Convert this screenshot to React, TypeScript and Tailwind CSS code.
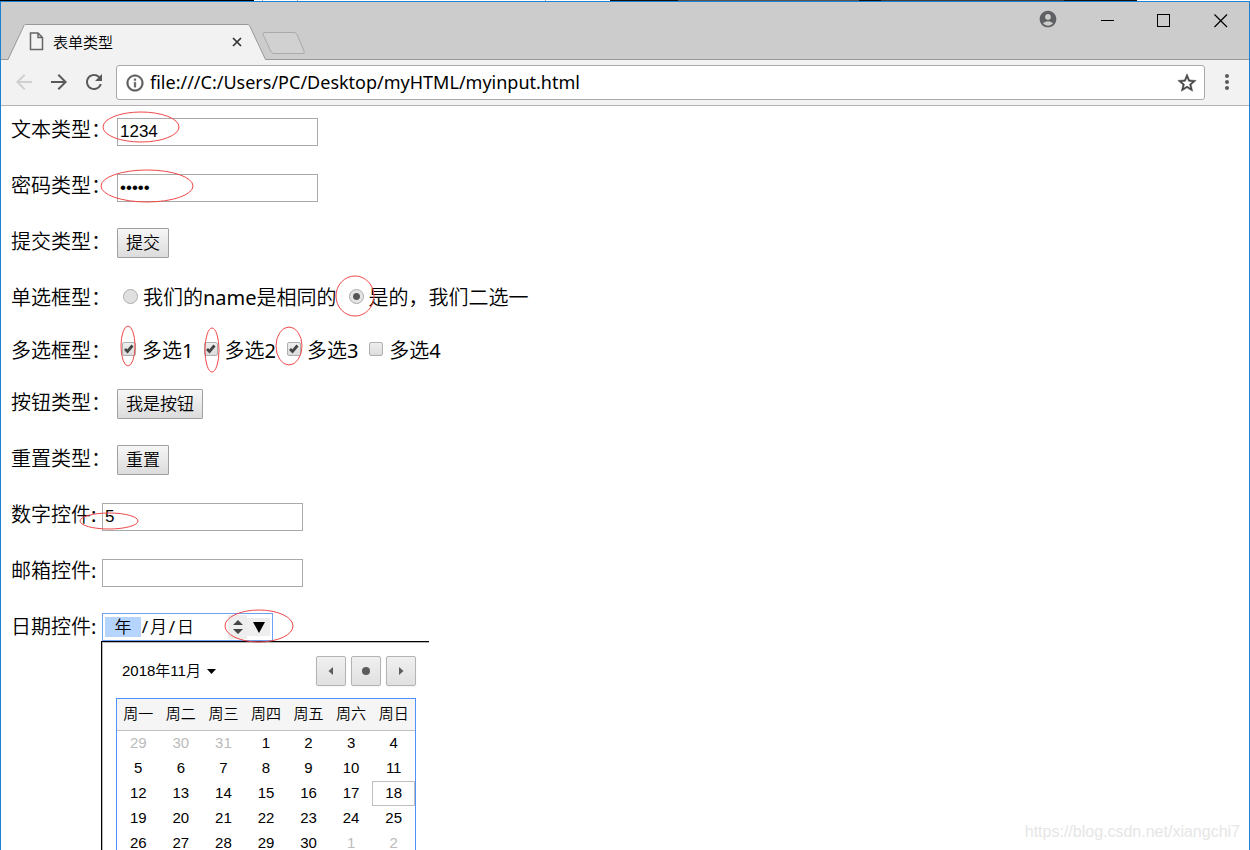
import React from "react";
import {
  MdAccountCircle,
  MdArrowBack,
  MdArrowForward,
  MdInfoOutline,
  MdMoreVert,
  MdRefresh,
  MdStarBorder,
} from "react-icons/md";

const weekdays = ["周一", "周二", "周三", "周四", "周五", "周六", "周日"];

const weeks = [
  [29, 30, 31, 1, 2, 3, 4],
  [5, 6, 7, 8, 9, 10, 11],
  [12, 13, 14, 15, 16, 17, 18],
  [19, 20, 21, 22, 23, 24, 25],
  [26, 27, 28, 29, 30, 1, 2],
];

const marks = [
  { cx: 141, cy: 127, rx: 38, ry: 15 },
  { cx: 147, cy: 186, rx: 46, ry: 16 },
  { cx: 355, cy: 296, rx: 19, ry: 20 },
  { cx: 128, cy: 346, rx: 7, ry: 20 },
  { cx: 212, cy: 350, rx: 7, ry: 22 },
  { cx: 289, cy: 346, rx: 13, ry: 19 },
  { cx: 109, cy: 521, rx: 29, ry: 8 },
  { cx: 259, cy: 626, rx: 34, ry: 16 },
];

const buttonLook =
  "border border-[#a0a0a0] rounded-[1px] bg-linear-to-b from-[#f6f6f6] to-[#dcdcdc]";

function DesktopStrip() {
  return (
    <div className="flex h-px shrink-0 bg-white">
      <span className="w-[254px] bg-black" />
      <span className="w-[8px]" />
      <span className="w-px bg-[#aaaaaa]" />
      <span className="w-[34px]" />
      <span className="w-px bg-[#aaaaaa]" />
      <span className="w-[247px]" />
      <span className="w-px bg-[#aaaaaa]" />
      <span className="w-[64px]" />
      <span className="w-[68px] bg-[#111111]" />
      <span className="w-[181px] bg-[#555555]" />
      <span className="w-[22px] bg-[#111111]" />
      <span className="w-[183px] bg-[#3c3c3c]" />
      <span className="w-[73px] bg-[#111111]" />
    </div>
  );
}

function TitleBar() {
  return (
    <header className="flex h-[58px] shrink-0 justify-between border-b border-[#999999] bg-[#cccccc]">
      <div className="relative mt-[22px] h-9 w-[310px]">
        <svg className="absolute inset-0" width="310" height="36" viewBox="0 0 310 36" aria-hidden="true">
          <path d="M7 36 L23 1.5 Q23.500 .5 24.500 .5 H247 Q248 .5 248.500 1.500 L264.500 36 Z" fill="#f2f2f2" />
          <path d="M7 35.500 L23 1.500 Q23.500 .5 24.500 .5 H247 Q248 .5 248.500 1.500 L264.500 35.500" fill="none" stroke="#999" />
          <path d="M264 8.500 H293 Q295 8.500 296 10.500 L303 27 Q304 29.500 302 29.500 H273 Q271 29.500 270 27.500 L262 10.500 Q261.500 8.500 264 8.500 Z" fill="#d0d1d0" stroke="#aaa" />
        </svg>
        <div className="relative flex h-[35px] w-[243px] items-center pl-[28px]">
          <svg width="15" height="19" viewBox="0 0 15 19" fill="none" stroke="#666" strokeWidth="1.500" aria-hidden="true">
            <path d="M1.500 1 H9 L13.500 5.500 V17.500 H1.500 Z M9 1 V5.500 H13.500" />
          </svg>
          <span className="ml-[9px] flex-1 text-[15px] leading-5">表单类型</span>
          <button type="button" aria-label="关闭标签页" className="p-0.5">
            <svg width="10" height="10" viewBox="0 0 10 10" stroke="#333" strokeWidth="1.700" aria-hidden="true">
              <path d="M1 1 L9 9 M9 1 L1 9" />
            </svg>
          </button>
        </div>
      </div>
      <div className="flex h-[37px] items-center gap-[43px] pr-[21px]">
        <button type="button" aria-label="用户" className="-mr-px pb-[3px] text-[#5f6063]">
          <MdAccountCircle size={20} />
        </button>
        <button type="button" aria-label="最小化">
          <svg width="14" height="14" viewBox="0 0 14 14" stroke="#000" aria-hidden="true">
            <path d="M1 6.500 H14" />
          </svg>
        </button>
        <button type="button" aria-label="最大化">
          <svg width="14" height="14" viewBox="0 0 14 14" stroke="#000" fill="none" aria-hidden="true">
            <rect x=".5" y=".5" width="12" height="12" />
          </svg>
        </button>
        <button type="button" aria-label="关闭">
          <svg width="14" height="14" viewBox="0 0 14 14" stroke="#000" strokeWidth="1.200" aria-hidden="true">
            <path d="M.5 .5 L13 13 M13 .5 L.5 13" />
          </svg>
        </button>
      </div>
    </header>
  );
}

function Toolbar() {
  return (
    <nav className="flex h-[46px] shrink-0 items-center border-b border-[#b3b3b3] bg-[#f2f2f2] pl-[11px] text-[#5a5a5a]">
      <button type="button" aria-label="后退" className="pb-0.5 text-[#d0d0d0]">
        <MdArrowBack size={24} />
      </button>
      <button type="button" aria-label="前进" className="ml-[11px] pb-0.5">
        <MdArrowForward size={24} />
      </button>
      <button type="button" aria-label="重新加载" className="ml-[11px] pb-0.5">
        <MdRefresh size={24} />
      </button>
      <div className="ml-[10px] flex h-[35px] flex-1 items-center rounded-[3px] border border-[#a9a9a9] bg-white pr-[6px] pl-[8px]">
        <MdInfoOutline size={20} strokeWidth={0.5} className="[&>path[fill=none]]:stroke-none" />
        <input
          aria-label="地址"
          defaultValue="file:///C:/Users/PC/Desktop/myHTML/myinput.html"
          className="ml-[5px] min-w-0 flex-1 pb-0.5 font-['Noto_Sans'] text-[18px] leading-6 text-black outline-none"
        />
        <button type="button" aria-label="收藏" className="text-[#444444]">
          <MdStarBorder size={22} strokeWidth={0.5} className="[&>path[fill=none]]:stroke-none" />
        </button>
      </div>
      <button type="button" aria-label="菜单" className="mr-[10px] ml-[10px] pb-0.5">
        <MdMoreVert size={24} />
      </button>
    </nav>
  );
}

function Row({ label, htmlFor, children }: { label: string; htmlFor?: string; children: React.ReactNode }) {
  return (
    <div className="flex h-7 items-start">
      <label htmlFor={htmlFor} className={label.endsWith("：") ? "w-[106px]" : "w-[91px]"}>
        {label}
      </label>
      {children}
    </div>
  );
}

function Field({ id, type, value }: { id: string; type: string; value?: string }) {
  return (
    <input
      id={id}
      type={type}
      defaultValue={value}
      className="h-7 w-[201px] border border-[#a9a9a9] bg-white px-[2px] font-['Liberation_Sans'] text-[17px] leading-5 outline-none"
    />
  );
}

function Radio({ text, checked }: { text: string; checked?: boolean }) {
  return (
    <label className="flex items-center">
      <input
        type="radio"
        name="same"
        defaultChecked={checked}
        className="mr-[5px] mb-[3px] size-[15px] appearance-none rounded-full border border-[#adadad] bg-[#e0e0e0] checked:bg-[radial-gradient(circle,#555_0_3px,#e4e4e4_4px)]"
      />
      {text}
    </label>
  );
}

function Check({ text, checked }: { text: string; checked?: boolean }) {
  return (
    <label className="flex items-center">
      <span className="mr-[6px] mb-[3px] grid size-[14px]">
        <input
          type="checkbox"
          defaultChecked={checked}
          className="peer col-start-1 row-start-1 size-[14px] appearance-none rounded-[2px] border border-[#b0b0b0] bg-linear-to-b from-[#eeeeee] to-[#dcdcdc]"
        />
        <svg
          className="pointer-events-none invisible col-start-1 row-start-1 peer-checked:visible"
          width="14"
          height="14"
          viewBox="0 0 14 14"
          fill="none"
          stroke="#444"
          strokeWidth="2.800"
          aria-hidden="true"
        >
          <path d="M3 7 L5.500 9.500 L10.500 3.500" />
        </svg>
      </span>
      {text}
    </label>
  );
}

function DateField() {
  return (
    <div className="-mt-0.5 flex h-7 w-[171px] items-center border border-[#6fa1f2] bg-white pl-[2px] text-[17px] leading-5">
      <input id="date" defaultValue="年" className="h-5 w-9 bg-[#b5d5ff] text-center outline-none" />
      <span className="w-2 text-center">/</span>
      <input aria-label="月" defaultValue="月" className="w-[19px] text-center outline-none" />
      <span className="w-2 text-center">/</span>
      <input aria-label="日" defaultValue="日" className="w-[19px] text-center outline-none" />
      <button type="button" aria-label="增减" className="ml-auto flex h-6 w-[19px] items-center justify-center bg-[#eeeeee]">
        <svg width="10" height="16" viewBox="0 0 10 16" fill="#444" aria-hidden="true">
          <path d="M0 6 L5 1 L10 6 Z M0 10 L5 15 L10 10 Z" />
        </svg>
      </button>
      <button type="button" aria-label="打开日历" className="mr-0.5 flex h-[18px] w-[23px] items-center justify-center bg-[#eeeeee]">
        <svg width="12" height="11" viewBox="0 0 12 11" aria-hidden="true">
          <path d="M0 0 H12 L6 11 Z" />
        </svg>
      </button>
    </div>
  );
}

function NavButton({ label, shape }: { label: string; shape: string }) {
  return (
    <button
      type="button"
      aria-label={label}
      className="flex size-[30px] items-center justify-center rounded-[2px] border border-[#b3b3b3] bg-linear-to-b from-[#f0f0f0] to-[#e0e0e0] shadow-xs"
    >
      <svg width="10" height="10" viewBox="0 0 10 10" fill="#5c5c5c" aria-hidden="true">
        <path d={shape} />
      </svg>
    </button>
  );
}

function Calendar() {
  return (
    <section className="-mt-0.5 ml-[90px] w-[328px] flex-1 border-t border-l border-black bg-white font-['Liberation_Sans','Noto_Sans_CJK_SC_DemiLight','Noto_Sans_CJK_SC',sans-serif] text-[15px] leading-5">
      <div className="h-full border-t border-l border-[#b8b8b8] px-[13px] pt-[13px]">
        <div className="flex items-center gap-[5px]">
          <button type="button" className="mr-auto flex items-center gap-[6px] pl-[6px]">
            2018年11月
            <svg width="9" height="5" viewBox="0 0 9 5" aria-hidden="true">
              <path d="M0 0 H9 L4.500 5 Z" />
            </svg>
          </button>
          <NavButton label="上个月" shape="M7 1 V9 L2.500 5 Z" />
          <NavButton label="今天" shape="M5 1 A4 4 0 1 1 5 9 A4 4 0 1 1 5 1 Z" />
          <NavButton label="下个月" shape="M3 1 V9 L7.500 5 Z" />
        </div>
        <div className="mt-3 border border-b-0 border-[#4d90fe]">
          <table className="w-full table-fixed border-collapse text-center">
            <thead className="bg-[#f5f5f5]">
              <tr className="h-[31px] border-b border-[#bfbfbf]">
                {weekdays.map((day) => (
                  <th key={day} className="p-0 font-normal">
                    {day}
                  </th>
                ))}
              </tr>
            </thead>
            <tbody>
              {weeks.map((week, row) => (
                <tr key={row}>
                  {week.map((day) => {
                    const outside = (row === 0 && day > 7) || (row === 4 && day < 8);
                    const today = day === 18;
                    return (
                      <td key={day} className="p-0">
                        <button
                          type="button"
                          className={`block h-[25px] w-full border ${today ? "border-[#bfbfbf]" : "border-transparent"} ${outside ? "text-[#bbbbbb]" : "text-black"}`}
                        >
                          {day}
                        </button>
                      </td>
                    );
                  })}
                </tr>
              ))}
            </tbody>
          </table>
        </div>
      </div>
    </section>
  );
}

export default function App() {
  return (
    <div
      className="relative flex h-screen flex-col overflow-hidden font-['Noto_Sans','Noto_Sans_CJK_SC_DemiLight','Noto_Sans_CJK_SC',sans-serif] text-black"
      lang="zh-CN"
    >
      <DesktopStrip />
      <div className="flex min-h-0 flex-1 flex-col border-x border-t border-[#1d80d0] bg-white">
        <TitleBar />
        <Toolbar />
        <main className="flex min-h-0 flex-1 flex-col overflow-hidden pt-3 pl-[10px] text-[20px] leading-6">
          <form className="flex shrink-0 flex-col gap-7" onSubmit={(e) => e.preventDefault()}>
            <Row label="文本类型：" htmlFor="text">
              <Field id="text" type="text" value="1234" />
            </Row>
            <Row label="密码类型：" htmlFor="password">
              <Field id="password" type="password" value="12345" />
            </Row>
            <Row label="提交类型：" htmlFor="submit">
              <button id="submit" type="submit" className={`${buttonLook} -mt-0.5 h-[30px] px-2 text-[17px] leading-5`}>
                提交
              </button>
            </Row>
            <div className="flex h-6 items-center">
              <span className="w-[112px]">单选框型：</span>
              <div className="flex gap-3">
                <Radio text="我们的name是相同的" />
                <Radio text="是的，我们二选一" checked />
              </div>
            </div>
            <div className="flex h-[25px] items-center">
              <span className="w-[111px]">多选框型：</span>
              <div className="flex gap-[11px]">
                <Check text="多选1" checked />
                <Check text="多选2" checked />
                <Check text="多选3" checked />
                <Check text="多选4" />
              </div>
            </div>
            <Row label="按钮类型：" htmlFor="plain">
              <button id="plain" type="button" className={`${buttonLook} -mt-0.5 h-[30px] px-2 text-[17px] leading-5`}>
                我是按钮
              </button>
            </Row>
            <Row label="重置类型：" htmlFor="reset">
              <button id="reset" type="reset" className={`${buttonLook} -mt-0.5 h-[30px] px-2 text-[17px] leading-5`}>
                重置
              </button>
            </Row>
            <Row label="数字控件:" htmlFor="number">
              <Field id="number" type="text" value="5" />
            </Row>
            <Row label="邮箱控件:" htmlFor="email">
              <Field id="email" type="email" />
            </Row>
            <Row label="日期控件:" htmlFor="date">
              <DateField />
            </Row>
          </form>
          <Calendar />
        </main>
      </div>
      <svg className="pointer-events-none absolute top-0 left-0" width="440" height="660" fill="none" stroke="#f04848" aria-hidden="true">
        {marks.map((m) => (
          <ellipse key={`${m.cx}-${m.cy}`} cx={m.cx} cy={m.cy} rx={m.rx} ry={m.ry} />
        ))}
      </svg>
      <span className="pointer-events-none absolute right-[10px] bottom-2 font-['Liberation_Sans'] text-[16px] leading-5 text-[#e6e6e6]">
        https://blog.csdn.net/xiangchi7
      </span>
    </div>
  );
}
